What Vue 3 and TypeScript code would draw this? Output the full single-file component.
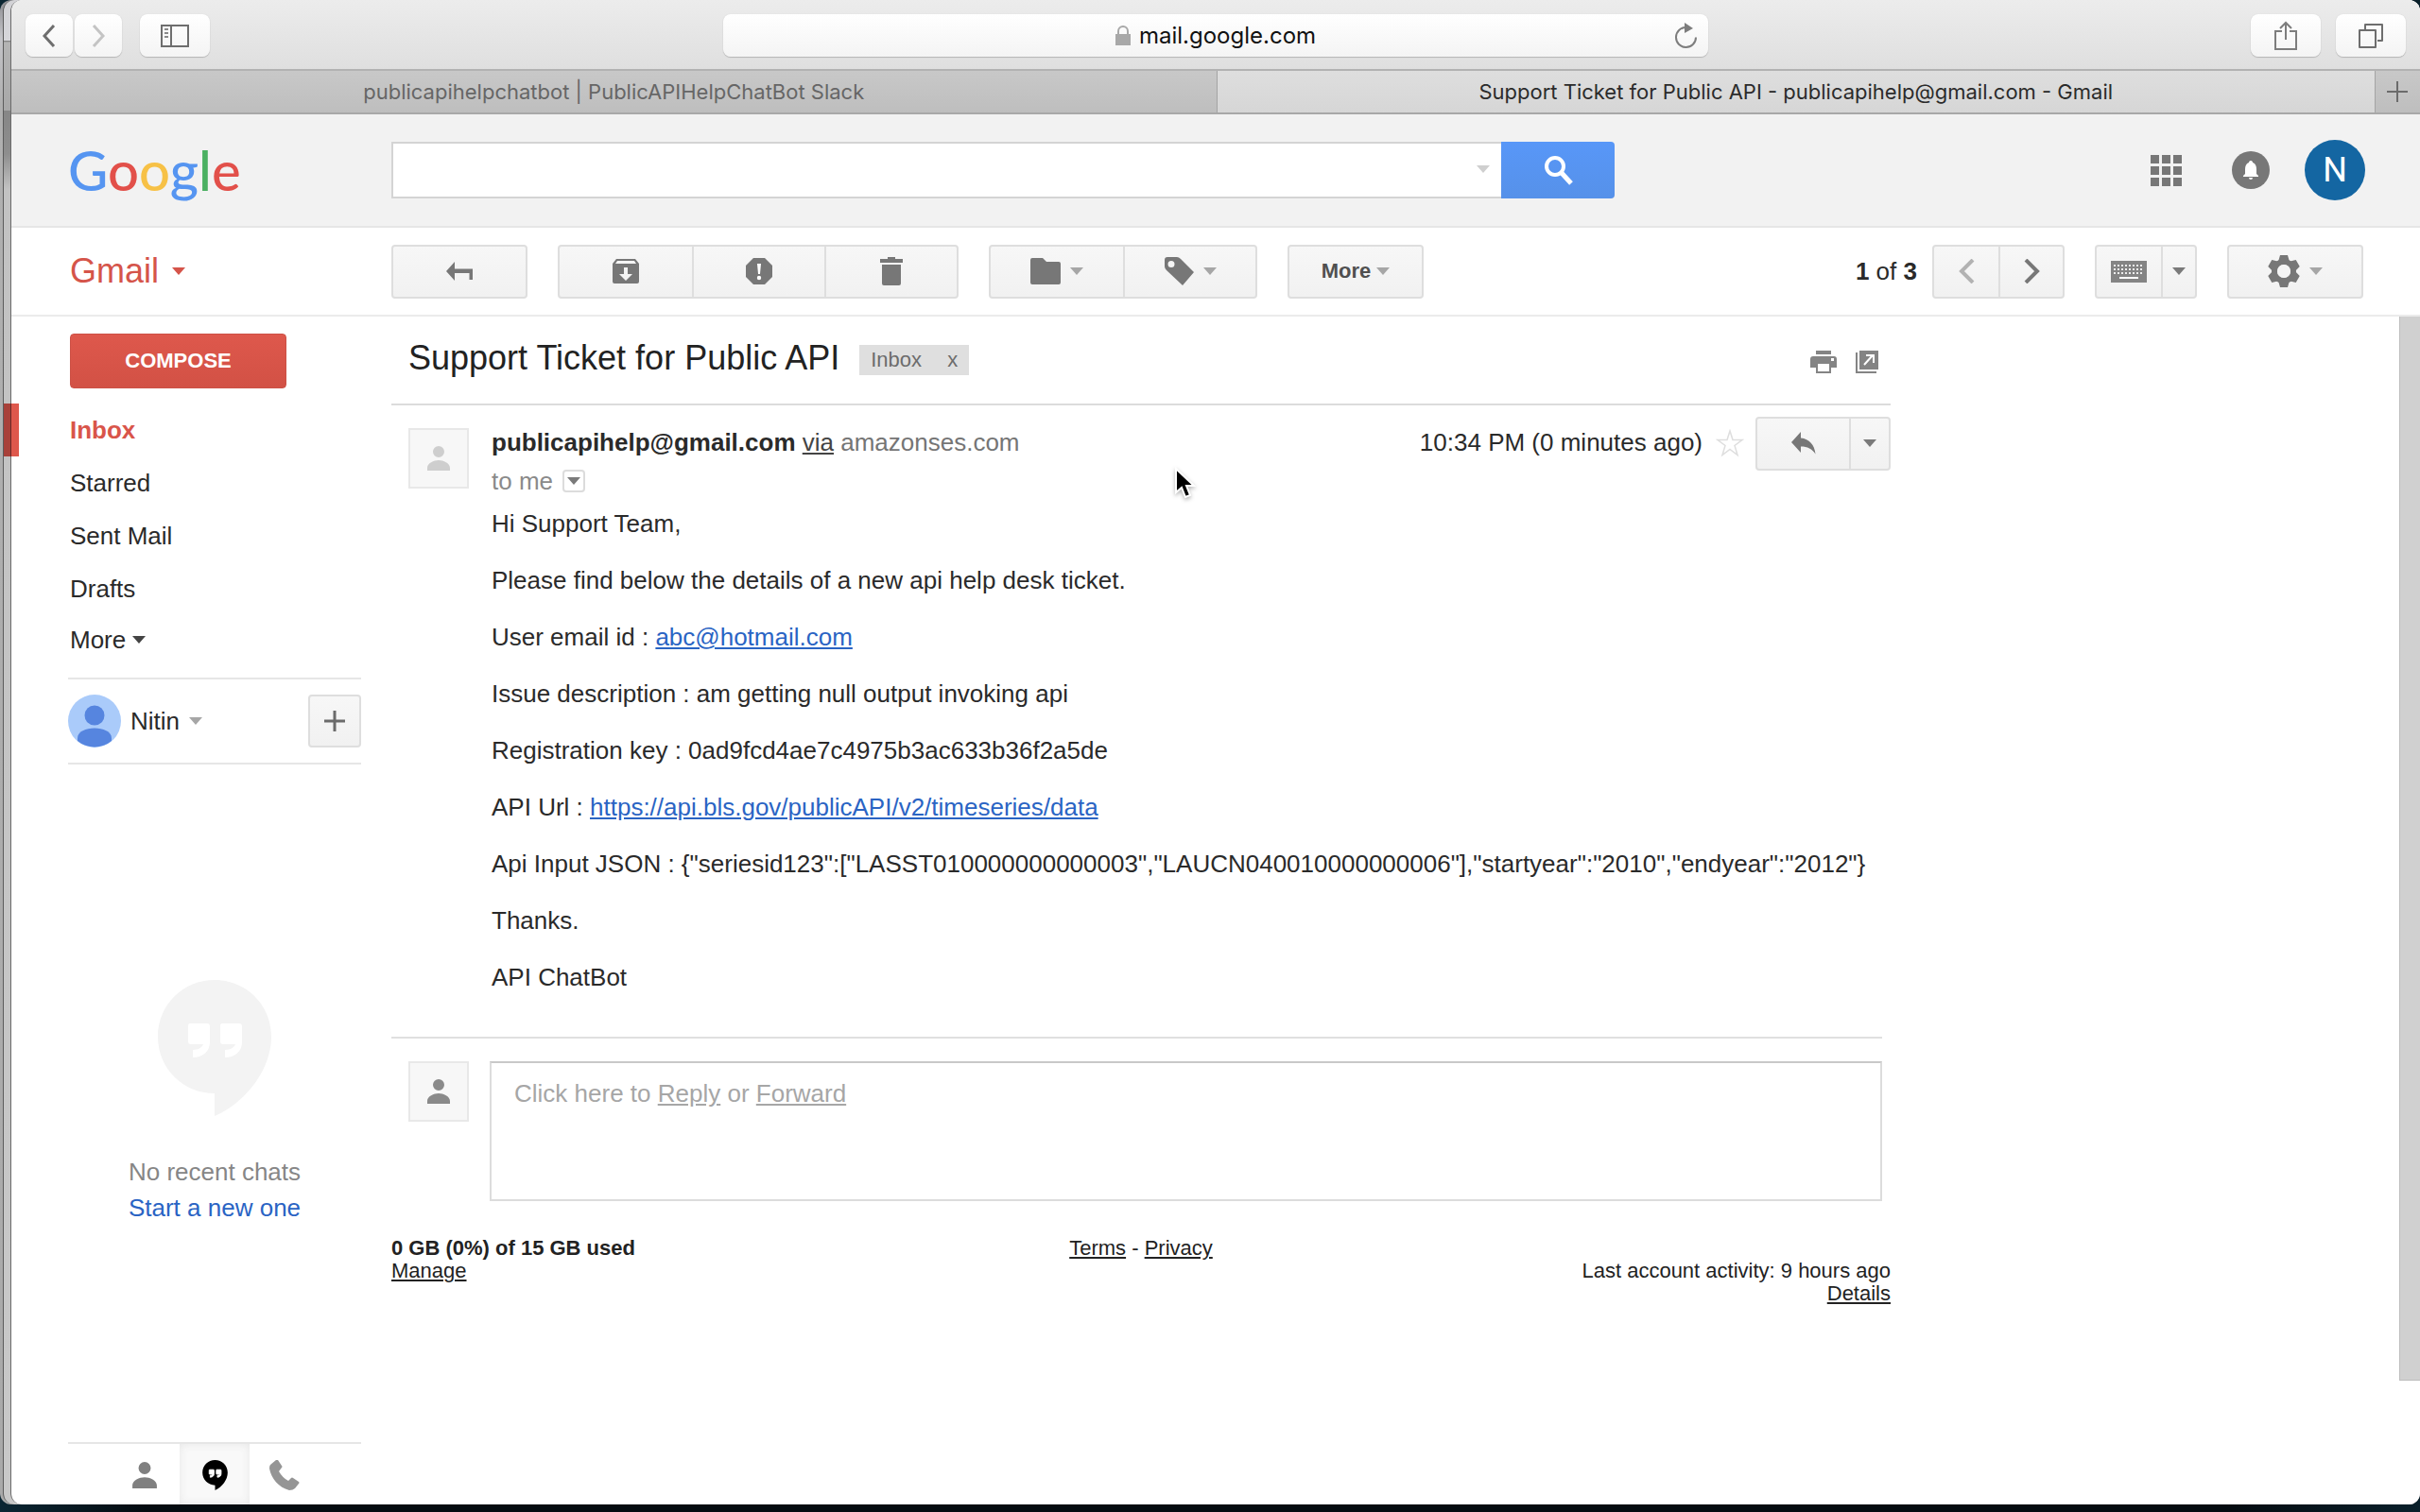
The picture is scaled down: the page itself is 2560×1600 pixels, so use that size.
<script setup lang="ts">
import { ref } from 'vue'

interface Folder {
  name: string
  active?: boolean
}

const query = ref('')

const folders: Folder[] = [
  { name: 'Inbox', active: true },
  { name: 'Starred' },
  { name: 'Sent Mail' },
  { name: 'Drafts' },
]

const logo = [
  { ch: 'G', color: '#5695f1' },
  { ch: 'o', color: '#e2504a' },
  { ch: 'o', color: '#f7c146' },
  { ch: 'g', color: '#5695f1' },
  { ch: 'l', color: '#4bb062' },
  { ch: 'e', color: '#e2504a' },
]

const apiInput =
  '{"seriesid123":["LASST010000000000003","LAUCN040010000000006"],"startyear":"2010","endyear":"2012"}'

const personPath =
  'M12 0a6 6 0 1 1 0 12a6 6 0 0 1 0-12zM0 26v-3c0-5 7-8 12-8s12 3 12 8v3z'
const bubblePath =
  'M60 0C27 0 0 26 0 60s27 60 60 60v24c34-15 60-50 60-84C120 26 93 0 60 0z'
const quotePath =
  'M34 46h18q3 0 3 3v17c0 10-8 16-18 16v-8c6 0 10-3 11-6H35q-3 0-3-3V49q0-3 2-3zM68 46h18q3 0 3 3v17c0 10-8 16-18 16v-8c6 0 10-3 11-6H69q-3 0-3-3V49q0-3 2-3z'
const gearTeeth = [0, 60, 120]
</script>

<template>
  <div class="desktop">
    <div class="back-window">
      <div class="mid-window">
        <div class="window">
          <header class="safari">
            <div class="safari-left">
              <div class="nav-pair">
                <button class="sbtn back" aria-label="Back">
                  <svg width="14" height="24" viewBox="0 0 14 24"><path d="M12 1L2 12l10 11" fill="none" stroke="#6e6e6e" stroke-width="3" /></svg>
                </button>
                <button class="sbtn forward" aria-label="Forward">
                  <svg width="14" height="24" viewBox="0 0 14 24"><path d="M2 1l10 11L2 23" fill="none" stroke="#c4c4c4" stroke-width="3" /></svg>
                </button>
              </div>
              <button class="sbtn wide" aria-label="Show sidebar">
                <svg width="30" height="24" viewBox="0 0 30 24"><path d="M1 1h28v22H1zM11 1v22" fill="none" stroke="#6e6e6e" stroke-width="2" /><path d="M4 5h4M4 9h4M4 13h4" stroke="#8a8a8a" stroke-width="2" /></svg>
              </button>
            </div>
            <div class="address">
              <span class="address-text">
                <svg width="16" height="21" viewBox="0 0 16 21"><path d="M0 9h16v12H0z" fill="#a8a8a8" /><path d="M3 10V6a5 5 0 0 1 10 0v4" fill="none" stroke="#a8a8a8" stroke-width="2" /></svg>
                mail.google.com
              </span>
              <button class="reload" aria-label="Reload">
                <svg width="24" height="28" viewBox="0 0 24 28"><path d="M13 5a10.500 10.500 0 1 0 10 10.500" fill="none" stroke="#7d7d7d" stroke-width="2" /><path d="M11 0l9 6-9 5z" fill="#7d7d7d" /></svg>
              </button>
            </div>
            <div class="safari-right">
              <button class="sbtn wide" aria-label="Share">
                <svg width="24" height="31" viewBox="0 0 24 31"><path d="M8 11H1v19h22V11h-7M12 20V2M6 8l6-6 6 6" fill="none" stroke="#7d7d7d" stroke-width="2" /></svg>
              </button>
              <button class="sbtn wide" aria-label="Show all tabs">
                <svg width="26" height="26" viewBox="0 0 26 26"><path d="M1 7h17v18H1zM7 6V1h18v17h-5" fill="none" stroke="#6e6e6e" stroke-width="2" stroke-linejoin="round" /></svg>
              </button>
            </div>
          </header>

          <nav class="tabs" aria-label="Browser tabs">
            <button class="tab first">publicapihelpchatbot | PublicAPIHelpChatBot Slack</button>
            <button class="tab current">Support Ticket for Public API - publicapihelp@gmail.com - Gmail</button>
            <button class="tab add" aria-label="New tab">
              <svg width="22" height="22" viewBox="0 0 22 22"><path d="M11 0v22M0 11h22" stroke="#6b6b6b" stroke-width="2" /></svg>
            </button>
          </nav>

          <div class="gbar">
            <div class="brand-col">
              <a href="#" class="logo" aria-label="Google"><span v-for="(l, i) in logo" :key="i" :style="{ color: l.color }">{{ l.ch }}</span></a>
            </div>
            <form class="search" @submit.prevent>
              <div class="search-field">
                <input v-model="query" type="text" aria-label="Search mail" />
                <button type="button" class="search-opts" aria-label="Search options"><span class="caret faint"></span></button>
              </div>
              <button class="search-btn" aria-label="Search">
                <svg width="32" height="32" viewBox="0 0 32 32"><circle cx="13" cy="12" r="9" fill="none" stroke="#fff" stroke-width="4" /><path d="M19 18l11 12" stroke="#fff" stroke-width="5" /></svg>
              </button>
            </form>
            <div class="account">
              <button class="plain" aria-label="Google apps">
                <svg width="33" height="33" viewBox="0 0 33 33" fill="#777"><path d="M0 0h9v9H0zM12 0h9v9h-9zM24 0h9v9h-9zM0 12h9v9H0zM12 12h9v9h-9zM24 12h9v9h-9zM0 24h9v9H0zM12 24h9v9h-9zM24 24h9v9h-9z" /></svg>
              </button>
              <button class="plain" aria-label="Notifications">
                <svg width="40" height="40" viewBox="0 0 40 40"><circle cx="20" cy="20" r="20" fill="#777" /><path d="M20 10c1.500 0 2 1 2 2 3 1 4 4 4 7v5l2 2v1H12v-1l2-2v-5c0-3 1-6 4-7 0-1 .5-2 2-2zM18 28h4q0 2-2 2t-2-2z" fill="#fff" /></svg>
              </button>
              <button class="avatar-n" aria-label="Account">N</button>
            </div>
          </div>

          <div class="toolbar">
            <div class="brand-col">
              <button class="gmail">Gmail <span class="caret red"></span></button>
            </div>
            <div class="actions">
              <div class="group">
                <button class="btn w-std" aria-label="Back to Inbox">
                  <svg width="28" height="20" viewBox="0 0 28 20"><path d="M0 10L9 0v7.500h19V19h-3.500v-7H9v8z" fill="#777" /></svg>
                </button>
              </div>
              <div class="group">
                <button class="btn w-std" aria-label="Archive">
                  <svg width="28" height="26" viewBox="0 0 28 26"><path d="M4 0h20l4 5v19q0 2-2 2H2q-2 0-2-2V5zM5 2L3 5h22l-2-3zM12 9v7H7l7 7 7-7h-5V9z" fill="#777" fill-rule="evenodd" /></svg>
                </button>
                <button class="btn w-std" aria-label="Report spam">
                  <svg width="28" height="28" viewBox="0 0 28 28"><path d="M8 0h12l8 8v12l-8 8H8l-8-8V8z" fill="#777" /><path d="M12 6h4l-1 11h-2z" fill="#fff" /><circle cx="14" cy="21" r="2.200" fill="#fff" /></svg>
                </button>
                <button class="btn w-std" aria-label="Delete">
                  <svg width="24" height="30" viewBox="0 0 24 30" fill="#777"><path d="M0 2h8V0h8v2h8v4H0zM2 8h20v20q0 2-2 2H4q-2 0-2-2z" /></svg>
                </button>
              </div>
              <div class="group">
                <button class="btn w-std" aria-label="Move to">
                  <svg width="32" height="28" viewBox="0 0 32 28"><path d="M2 0h11l4 4h13q2 0 2 2v20q0 2-2 2H2q-2 0-2-2V2q0-2 2-2z" fill="#777" /></svg>
                  <span class="caret"></span>
                </button>
                <button class="btn w-std" aria-label="Labels">
                  <svg width="31" height="30" viewBox="0 0 31 30"><path d="M3 0h10q2 0 4 2l14 14-12 14L2 14q-2-2-2-4V3q0-3 3-3zM7 4a3.500 3.500 0 1 0 0 7a3.500 3.500 0 0 0 0-7z" fill="#777" fill-rule="evenodd" /></svg>
                  <span class="caret"></span>
                </button>
              </div>
              <div class="group">
                <button class="btn w-std more">More <span class="caret"></span></button>
              </div>
            </div>
            <div class="pager">
              <span class="count"><b>1</b> of <b>3</b></span>
              <div class="group">
                <button class="btn w-half" aria-label="Newer">
                  <svg width="17" height="26" viewBox="0 0 17 26"><path d="M15 1L3 13l12 12" fill="none" stroke="#b2b2b2" stroke-width="4" /></svg>
                </button>
                <button class="btn w-half" aria-label="Older">
                  <svg width="17" height="26" viewBox="0 0 17 26"><path d="M2 1l12 12L2 25" fill="none" stroke="#777" stroke-width="4" /></svg>
                </button>
              </div>
            </div>
            <div class="group">
              <button class="btn w-half" aria-label="Input tools">
                <svg class="kbd" width="38" height="23" viewBox="0 0 38 23"><path d="M0 0h38v23H0z" fill="#848484" /><path d="M3 5h32M3 9h32M3 13h32" stroke="#ececec" stroke-width="2" stroke-dasharray="2 2" /><path d="M9 18h20" stroke="#fff" stroke-width="2" /></svg>
              </button>
              <button class="btn w-drop" aria-label="Select input tool"><span class="caret dark"></span></button>
            </div>
            <div class="group">
              <button class="btn w-std" aria-label="Settings">
                <svg width="34" height="34" viewBox="-17 -17 34 34"><circle r="10" fill="none" stroke="#777" stroke-width="6" /><g fill="#777"><path v-for="a in gearTeeth" :key="a" d="M-4-17h8l2 7H-6zM-4 17h8l2-7H-6z" :transform="`rotate(${a})`" /></g><circle r="7" fill="#f4f4f4" /></svg>
                <span class="caret"></span>
              </button>
            </div>
          </div>

          <div class="page">
            <aside class="side">
              <button class="compose">COMPOSE</button>
              <nav class="folders" aria-label="Mail folders">
                <a v-for="f in folders" :key="f.name" href="#" :class="{ active: f.active }">{{ f.name }}</a>
                <button class="more-folders">More <span class="caret black"></span></button>
              </nav>
              <div class="me">
                <svg width="56" height="56" viewBox="0 0 56 56"><circle cx="28" cy="28" r="28" fill="#aacbfa" /><circle cx="28" cy="22" r="10.500" fill="#5685df" /><path d="M10 49v-3c0-7 9-10.500 18-10.500S46 39 46 46v3a28 28 0 0 1-36 0z" fill="#5685df" /></svg>
                <button class="me-name">Nitin <span class="caret"></span></button>
                <button class="plus" aria-label="Start a conversation">
                  <svg width="22" height="22" viewBox="0 0 22 22"><path d="M11 0v22M0 11h22" stroke="#6b6b6b" stroke-width="3" /></svg>
                </button>
              </div>
              <div class="chats">
                <svg width="120" height="144" viewBox="0 0 120 144"><path :d="bubblePath" fill="#f3f3f3" /><path :d="quotePath" fill="#fff" /></svg>
                <p>No recent chats</p>
                <a href="#">Start a new one</a>
              </div>
              <div class="chat-tabs">
                <button aria-label="Contacts">
                  <svg width="26" height="28" viewBox="0 0 24 26"><path :d="personPath" fill="#808080" /></svg>
                </button>
                <button class="on" aria-label="Hangouts">
                  <svg width="27" height="32" viewBox="0 0 120 144"><path :d="bubblePath" fill="#000" /><path :d="quotePath" fill="#fff" stroke="#fff" stroke-width="4" /></svg>
                </button>
                <button aria-label="Phone calls">
                  <svg width="32" height="32" viewBox="0 0 32 32"><path d="M1 5L7 0q1-1 2 0l4 6q1 1 0 2l-3 4q4 7 10 10l3-3q1-1 2 0l6 4q1 1 0 2l-4 5q-2 2-6 2C10 29 2 20 0 9q0-3 1-4z" fill="#959595" /></svg>
                </button>
              </div>
            </aside>

            <main class="main">
              <div class="subject">
                <h1>Support Ticket for Public API</h1>
                <span class="label">Inbox <button aria-label="Remove label Inbox">x</button></span>
                <div class="subject-tools">
                  <button class="plain" aria-label="Print all">
                    <svg width="28" height="24" viewBox="0 0 28 24" fill="#848484"><path d="M6 0h16v4H6z" /><path d="M3 6h22q3 0 3 3v9h-6v6H6v-6H0V9q0-3 3-3zM8 14v8h12v-8zM22 8v3h3V8z" fill-rule="evenodd" /></svg>
                  </button>
                  <button class="plain" aria-label="In new window">
                    <svg width="24" height="24" viewBox="0 0 24 24"><path d="M4 0h20v20H4z" fill="#848484" /><path d="M1 2v21h21" fill="none" stroke="#848484" stroke-width="2" /><path d="M9 15L18 5M11 5h8v8" fill="none" stroke="#fff" stroke-width="2" /></svg>
                  </button>
                </div>
              </div>

              <article class="message">
                <div class="face">
                  <svg width="24" height="26" viewBox="0 0 24 26"><path :d="personPath" fill="#cecece" /></svg>
                </div>
                <div class="content">
                  <div class="head">
                    <span class="from"><b>publicapihelp@gmail.com</b> <a href="#">via</a> amazonses.com</span>
                    <span class="time">10:34 PM (0 minutes ago)</span>
                    <button class="plain star" aria-label="Star">
                      <svg width="30" height="30" viewBox="0 0 30 30"><path d="M15 2l3 9.500h10L20 17.500l3 10-8-6-8 6 3-10-8-6h10z" fill="#fff" stroke="#dedede" stroke-width="1.500" /></svg>
                    </button>
                    <div class="group">
                      <button class="btn w-reply" aria-label="Reply">
                        <svg width="26" height="24" viewBox="0 0 26 24"><path d="M0 11L10 0v6.500c9 1 14.500 7 15.500 17C22 18 17 15.500 10 15.500V22z" fill="#777" /></svg>
                      </button>
                      <button class="btn w-caret" aria-label="More message actions"><span class="caret dark"></span></button>
                    </div>
                  </div>
                  <div class="to">to me <button aria-label="Show details"><span class="caret dark"></span></button></div>
                  <div class="body">
                    <p>Hi Support Team,</p>
                    <p>Please find below the details of a new api help desk ticket.</p>
                    <p>User email id : <a href="#">abc@hotmail.com</a></p>
                    <p>Issue description : am getting null output invoking api</p>
                    <p>Registration key : 0ad9fcd4ae7c4975b3ac633b36f2a5de</p>
                    <p>API Url : <a href="#">https://api.bls.gov/publicAPI/v2/timeseries/data</a></p>
                    <p>Api Input JSON : {{ apiInput }}</p>
                    <p>Thanks.</p>
                    <p>API ChatBot</p>
                  </div>
                </div>
              </article>

              <section class="reply">
                <div class="face">
                  <svg width="24" height="26" viewBox="0 0 24 26"><path :d="personPath" fill="#8a8a8a" /></svg>
                </div>
                <div class="reply-box">Click here to <a href="#">Reply</a> or <a href="#">Forward</a></div>
              </section>

              <footer class="foot">
                <div><b>0 GB (0%) of 15 GB used</b><br /><a href="#">Manage</a></div>
                <div class="mid"><a href="#">Terms</a> - <a href="#">Privacy</a></div>
                <div class="end">Last account activity: 9 hours ago<br /><a href="#">Details</a></div>
              </footer>
            </main>

            <div class="scroll"><div class="thumb"></div></div>
          </div>
        </div>
      </div>
    </div>
    <svg class="pointer" width="24" height="36" viewBox="0 0 24 36"><path d="M2 2v25l6-5 4 10 5-2-4-10h8z" fill="#000" stroke="#fff" stroke-width="2" /></svg>
  </div>
</template>

<style>
body {
  margin: 0;
  background: #06131b;
}
</style>

<style scoped>
* {
  box-sizing: border-box;
}
.desktop {
  position: relative;
  display: flex;
  min-height: 100vh;
  padding-bottom: 8px;
  background: linear-gradient(90deg, #0b2633, #040b10 6%, #040b10 92%, #0a202b);
  color: #2a2a2a;
  font-family: "Liberation Sans", Arial, sans-serif;
  font-size: 26px;
  line-height: 30px;
}
button,
input {
  margin: 0;
  padding: 0;
  border: 0;
  background: none;
  color: inherit;
  font: inherit;
}
svg {
  display: block;
  flex: none;
}
p,
h1 {
  margin: 0;
}
.plain {
  display: flex;
}
.back-window,
.mid-window,
.window {
  display: flex;
  flex: 1;
  min-width: 0;
  border-radius: 12px;
}
.back-window {
  padding-left: 3px;
  background: linear-gradient(#8d8d92 0, #c4c4c8 40px, #b0b0b0 110px, #a9a9a9 100%);
}
.mid-window {
  padding-left: 7px;
  border-left: 1px solid #5c5c5c;
  background: linear-gradient(#d2d2d6 0, #d6d6da 43px, #777 43px, #b4b4b4 45px, #a8a8a8 117px, #868686 117px, #8e8e8e 163px, #c2c2c2 200px, #c8c8c8 100%);
}
.window {
  flex-direction: column;
  border-left: 1px solid #6a6a6a;
  background: #fff;
}

/* Browser chrome */
.safari {
  display: grid;
  grid-template-columns: 1fr minmax(0, 1042px) 1fr;
  align-items: center;
  height: 73px;
  padding: 2px 15px 0;
  border-radius: 12px 12px 0 0;
  background: linear-gradient(#ececec, #dfdfdf);
  font-family: Inter, "Liberation Sans", sans-serif;
}
.safari-left,
.safari-right,
.nav-pair {
  display: flex;
}
.safari-left {
  gap: 19px;
}
.safari-right {
  justify-content: flex-end;
  gap: 16px;
}
.nav-pair {
  gap: 2px;
}
.sbtn,
.address {
  display: flex;
  align-items: center;
  justify-content: center;
  height: 45px;
  border-radius: 8px;
  background: linear-gradient(#fff, #f4f4f4);
  box-shadow: 0 1px 1px #b4b4b4, 0 0 1px #c8c8c8;
}
.sbtn {
  width: 50px;
}
.wide {
  width: 74px;
}
.address {
  position: relative;
  color: #111;
  font-size: 24px;
}
.address-text {
  display: flex;
  align-items: center;
  gap: 9px;
}
.reload {
  position: absolute;
  right: 12px;
}
.tabs {
  display: grid;
  grid-template-columns: 1274fr 1226fr 47px;
  height: 48px;
  border-top: 2px solid #b2b2b2;
  border-bottom: 2px solid #a8a8a8;
  font-family: Inter, "Liberation Sans", sans-serif;
  font-size: 22px;
}
.tab {
  display: flex;
  align-items: center;
  justify-content: center;
  min-width: 0;
  background: linear-gradient(#c8c8c8, #bebebe);
  color: #666;
  white-space: nowrap;
}
.tab.current {
  border: solid #a4a4a4;
  border-width: 0 1px;
  background: linear-gradient(#dedede, #d6d6d6);
  color: #2b2b2b;
}

/* Google bar */
.gbar,
.toolbar {
  display: flex;
  align-items: center;
}
.gbar {
  height: 120px;
  padding-right: 58px;
  border-bottom: 2px solid #e6e6e6;
  background: #f2f2f2;
}
.brand-col {
  flex: none;
  width: 402px;
  padding-left: 60px;
}
.logo {
  font-family: Lato, "Liberation Sans", sans-serif;
  font-size: 58px;
  font-weight: 500;
  line-height: 64px;
  text-decoration: none;
}
.search {
  display: flex;
  flex: 0 1 1294px;
  height: 60px;
}
.search-field {
  position: relative;
  flex: 1;
}
.search-field input {
  width: 100%;
  height: 100%;
  padding: 0 48px 0 16px;
  border: 2px solid #d4d4d4;
  border-right: 0;
  background: #fff;
}
.search-opts {
  position: absolute;
  top: 16px;
  right: 7px;
  display: grid;
  place-items: center;
  width: 24px;
  height: 26px;
}
.search-btn {
  display: grid;
  place-items: center;
  width: 120px;
  border-radius: 0 4px 4px 0;
  background: linear-gradient(#5897f8, #5691e9);
}
.account {
  display: flex;
  align-items: center;
  gap: 37px;
  margin-left: auto;
}
.account .plain:first-child {
  margin-right: 16px;
}
.avatar-n {
  width: 64px;
  height: 64px;
  border-radius: 50%;
  background: #1466a2;
  color: #fff;
  font-family: Roboto, "Liberation Sans", sans-serif;
  font-size: 36px;
}

/* Gmail toolbar */
.toolbar {
  gap: 32px;
  height: 94px;
  padding-right: 60px;
  border-bottom: 2px solid #ebebeb;
}
.toolbar .brand-col {
  margin-right: -32px;
  padding-left: 62px;
}
.gmail {
  display: flex;
  align-items: center;
  gap: 14px;
  color: #d5544a;
  font-size: 36px;
}
.actions {
  display: flex;
  flex: 1;
  gap: 32px;
}
.pager {
  display: flex;
  align-items: center;
  gap: 16px;
}
.count {
  white-space: nowrap;
}
.group {
  display: flex;
  height: 57px;
  border: 2px solid #dedede;
  border-radius: 4px;
  background: linear-gradient(#f7f7f7, #f1f1f1);
}
.btn {
  display: flex;
  align-items: center;
  justify-content: center;
  gap: 10px;
}
.btn + .btn {
  border-left: 2px solid #dedede;
}
.w-std {
  width: 140px;
}
.w-half {
  width: 68px;
}
.w-drop {
  width: 36px;
}
.w-reply {
  width: 97px;
}
.w-caret {
  width: 42px;
}
.more {
  gap: 6px;
  color: #505050;
  font-size: 22px;
  font-weight: bold;
}
.caret {
  display: inline-block;
  width: 0;
  height: 0;
  border: solid transparent;
  border-width: 8px 7px 0;
  border-top-color: #a6a6a6;
}
.caret.faint {
  border-top-color: #cfcfcf;
}
.caret.red {
  border-top-color: #d5544a;
}
.caret.dark {
  border-top-color: #7a7a7a;
}
.caret.black {
  border-top-color: #444;
}

/* Page columns */
.page {
  display: grid;
  flex: 1;
  grid-template-columns: 370px minmax(0, 1fr) 22px;
  column-gap: 32px;
}
.side {
  display: flex;
  flex-direction: column;
  padding: 18px 0 0 60px;
}
.compose {
  width: 229px;
  height: 58px;
  margin-left: 2px;
  border: 1px solid #cc5146;
  border-radius: 4px;
  background: linear-gradient(#de584c, #d25145);
  color: #fff;
  font-size: 22px;
  font-weight: bold;
}
.folders {
  display: flex;
  flex-direction: column;
  margin: 16px 0 14px;
  padding-left: 2px;
}
.folders a {
  position: relative;
  color: inherit;
  line-height: 56px;
  text-decoration: none;
}
.folders .active {
  color: #d9554a;
  font-weight: bold;
}
.folders .active::before {
  content: "";
  position: absolute;
  top: 0;
  left: -70px;
  width: 16px;
  height: 56px;
  background: linear-gradient(90deg, #a8413a 7px, #6b2a26 7px, #6b2a26 8px, #de584c 8px);
}
.more-folders,
.me-name {
  display: flex;
  align-items: center;
  gap: 7px;
  height: 52px;
}
.me {
  display: flex;
  align-items: center;
  gap: 10px;
  height: 92px;
  border: solid #e6e6e6;
  border-width: 2px 0;
}
.me-name {
  gap: 10px;
}
.plus {
  display: grid;
  place-items: center;
  width: 56px;
  height: 56px;
  margin-left: auto;
  border: 2px solid #dedede;
  border-radius: 4px;
  background: linear-gradient(#f7f7f7, #f1f1f1);
}
.chats {
  display: flex;
  flex-direction: column;
  align-items: center;
  margin: 228px 0;
  color: #868686;
  line-height: 38px;
}
.chats p {
  margin-top: 40px;
}
.chats a {
  color: #2a64c4;
  text-decoration: none;
}
.chat-tabs {
  display: flex;
  justify-content: center;
  height: 66px;
  margin-top: auto;
  border-top: 2px solid #e6e6e6;
}
.chat-tabs button {
  display: grid;
  place-items: center;
  width: 74px;
  padding-top: 2px;
}
.chat-tabs .on {
  background: #f9f9f9;
  box-shadow: inset 0 0 10px #e6e6e6;
}

/* Conversation */
.main {
  margin-right: 506px;
}
.subject {
  display: flex;
  align-items: center;
  height: 94px;
  padding: 0 13px 0 18px;
  border-bottom: 2px solid #dcdcdc;
}
.subject h1 {
  padding-bottom: 4px;
  color: #222;
  font-size: 36px;
  font-weight: normal;
  line-height: 40px;
}
.label {
  display: flex;
  align-items: center;
  justify-content: space-between;
  width: 116px;
  height: 32px;
  margin-left: 21px;
  padding: 0 12px;
  background: #dfdfdf;
  color: #6c6c6c;
  font-size: 22px;
}
.subject-tools {
  display: flex;
  gap: 20px;
  margin-left: auto;
  padding-top: 4px;
}
.message {
  display: flex;
  gap: 24px;
  padding: 12px 0 48px 18px;
}
.face {
  display: grid;
  flex: none;
  place-items: center;
  width: 64px;
  height: 64px;
  border: 2px solid #e8e8e8;
  background: #f7f7f7;
}
.message .face {
  margin-top: 12px;
}
.content {
  flex: 1;
  min-width: 0;
}
.head {
  display: flex;
  align-items: center;
  height: 56px;
}
.from,
.time {
  padding-bottom: 2px;
}
.from {
  margin-right: auto;
  color: #757575;
}
.from b {
  color: #2a2a2a;
}
.from a {
  color: #444;
}
.star {
  margin: 0 12px 0 14px;
}
.to {
  display: flex;
  align-items: center;
  gap: 10px;
  height: 24px;
  color: #8a8a8a;
}
.to button {
  display: grid;
  place-items: center;
  width: 24px;
  height: 24px;
  border: 2px solid #dcdcdc;
  border-radius: 4px;
}
.body {
  display: flex;
  flex-direction: column;
  gap: 30px;
  margin-top: 18px;
}
.body a {
  color: #2a64c4;
}
.reply {
  display: flex;
  gap: 22px;
  margin-right: 9px;
  padding: 24px 0 0 18px;
  border-top: 2px solid #e0e0e0;
}
.reply-box {
  flex: 1;
  height: 148px;
  padding: 17px 24px;
  border: 2px solid #dcdcdc;
  border-top-color: #c8c8c8;
  color: #a6a6a6;
}
.reply-box a {
  color: inherit;
}
.foot {
  display: grid;
  grid-template-columns: 1fr auto 1fr;
  margin-top: 38px;
  color: #222;
  font-size: 22px;
  line-height: 24px;
}
.foot a {
  color: inherit;
}
.foot .end {
  padding-top: 24px;
  text-align: right;
}
.scroll {
  display: flex;
}
.thumb {
  flex: 1;
  margin-bottom: 131px;
  border: solid #bdbdbd;
  border-width: 0 0 1px 1px;
  background: #d0d0d0;
}
.pointer {
  position: absolute;
  top: 494px;
  left: 1242px;
  filter: drop-shadow(0 2px 2px rgba(0, 0, 0, 0.3));
}
</style>
